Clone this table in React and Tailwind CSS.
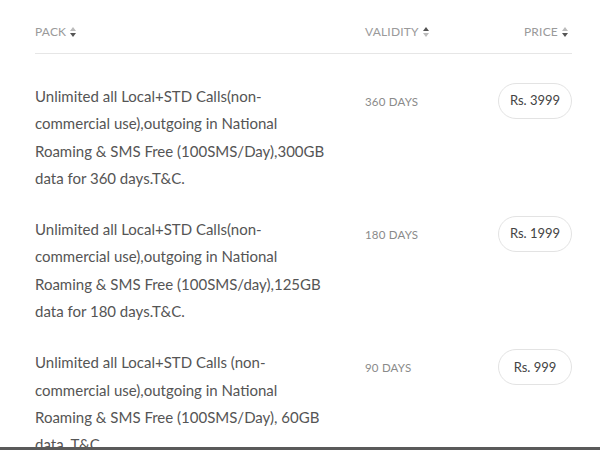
import React from 'react';

const packs = [
  {
    lines: ['Unlimited all Local+STD Calls(non-', 'commercial use),outgoing in National', 'Roaming & SMS Free (100SMS/Day),300GB', 'data for 360 days.T&C.'],
    validity: '360 DAYS',
    price: 'Rs. 3999',
  },
  {
    lines: ['Unlimited all Local+STD Calls(non-', 'commercial use),outgoing in National', 'Roaming & SMS Free (100SMS/day),125GB', 'data for 180 days.T&C.'],
    validity: '180 DAYS',
    price: 'Rs. 1999',
  },
  {
    lines: ['Unlimited all Local+STD Calls (non-', 'commercial use),outgoing in National', 'Roaming & SMS Free (100SMS/Day), 60GB', 'data. T&C.'],
    validity: '90 DAYS',
    price: 'Rs. 999',
  },
];

function SortIcon({ active }) {
  return (
    <svg width="6" height="10" viewBox="0 0 6 10" className="ml-[4px] inline-block">
      <path d="M3 0 L6 4 L0 4 Z" fill={active === 'up' ? '#555' : '#bbb'} />
      <path d="M3 10 L6 6 L0 6 Z" fill={active === 'down' ? '#555' : '#bbb'} />
    </svg>
  );
}

export default function App() {
  return (
    <div className="relative h-[450px] w-[600px] overflow-hidden bg-white font-['Lato',sans-serif]">
      <div className="pl-[35px] pr-[28px]">
        {/* Header */}
        <div className="flex h-[54px] items-center border-b border-[#e6e6e6] pt-[10px] text-[12px] tracking-[0.2px] text-[#9a9a9a]">
          <div className="flex w-[330px] items-center">
            PACK <SortIcon active="down" />
          </div>
          <div className="flex flex-1 items-center">
            VALIDITY <SortIcon active="up" />
          </div>
          <div className="flex items-center pr-[4px]">
            PRICE <SortIcon active="down" />
          </div>
        </div>

        {/* Rows */}
        <div className="flex flex-col gap-[24px] pt-[29px]">
          {packs.map((p) => (
            <div key={p.price} className="flex items-start">
              <div className="w-[330px] text-[15px] leading-[27.3px] text-[#555]">
                {p.lines.map((l) => (
                  <div key={l} className="whitespace-nowrap">{l}</div>
                ))}
              </div>
              <div className="flex-1 pt-[10px] text-[11.5px] tracking-[0.2px] text-[#8a8a8a]">{p.validity}</div>
              <div className="flex h-[36px] w-[74px] items-center justify-center rounded-full border border-[#e3e3e3] text-[13px] text-[#444]">
                {p.price}
              </div>
            </div>
          ))}
        </div>
      </div>

      {/* bottom edge */}
      <div className="absolute bottom-0 left-0 right-0 h-[3px] bg-[#5a5a5a]" />
    </div>
  );
}
